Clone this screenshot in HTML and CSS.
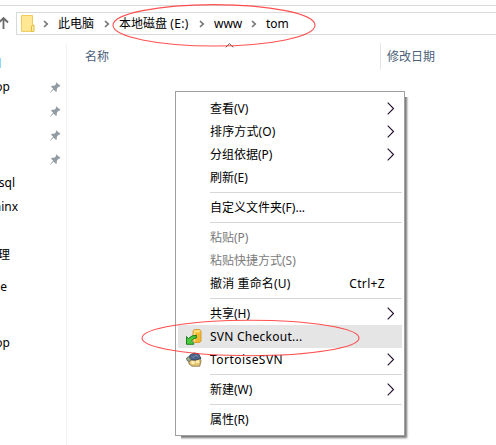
FILE: index.html
```
<!DOCTYPE html>
<html lang="zh-CN">
<head>
<meta charset="utf-8">
<title>tom</title>
<link rel="stylesheet" href="styles.css">
</head>
<body>
<svg class="defs" width="0" height="0" aria-hidden="true">
  <symbol id="crumb" viewBox="0 0 6 8"><path d="M1 1l3.2 3L1 7" fill="none" stroke="#747474" stroke-width="1.7"/></symbol>
  <symbol id="arrow" viewBox="0 0 8 13"><path d="M.7.7l5.8 5.8-5.8 5.8" fill="none" stroke="#24102e" stroke-width="1.1"/></symbol>
  <symbol id="pin" viewBox="0 0 11 11"><path d="M6.2.2l4.400 3.800-1 .8-.8-.2-2 2.200.1 2.300-.9.8-2.300-2.400L.3 10.800 0 10.500l3.100-3.700L1 4.600l.9-.9 2.500.1 2-2-.7-.8z" fill="#919ba3"/></symbol>
</svg>
<div class="window">
  <header class="toolbar">
    <svg class="up" width="10" height="14" viewBox="0 0 10 14"><path d="M3.500 13V2M-1 6.500L3.500 2 8 6.500" fill="none" stroke="#696969" stroke-width="1.8"/></svg>
    <nav class="address">
      <svg class="folder" width="14" height="17" viewBox="0 0 14 17"><path d="M.5.5h11v10h1.200v5.900H.5z" fill="#ffe793" stroke="#efcb5b"/><path d="M10.500 16.400V11l2.500-1v6.400z" fill="#fff0ae" stroke="#e6bb43"/></svg>
      <svg class="crumb"><use href="#crumb"/></svg><span class="c1">此电脑</span>
      <svg class="crumb"><use href="#crumb"/></svg><span class="c2">本地磁盘 <span class="letter">(E:)</span></span>
      <svg class="crumb"><use href="#crumb"/></svg><span class="c3">www</span>
      <svg class="crumb"><use href="#crumb"/></svg><span>tom</span>
    </nav>
  </header>
  <div class="content">
    <aside class="sidebar">
      <div class="row quick"><i></i></div>
      <div class="row"><span class="w9">op</span><svg class="pin"><use href="#pin"/></svg></div>
      <div class="row"><svg class="pin"><use href="#pin"/></svg></div>
      <div class="row"><svg class="pin"><use href="#pin"/></svg></div>
      <div class="row"><svg class="pin"><use href="#pin"/></svg></div>
      <div class="row"><span class="w15">sql</span></div>
      <div class="row"><span class="w18">ninx</span></div>
      <div class="row"></div>
      <div class="row"><span class="w9">理</span></div>
      <div class="row drive"><span class="w7">e</span></div>
      <div class="row"></div>
      <div class="row"><span class="w9">op</span></div>
    </aside>
    <main class="files">
      <div class="columns">
        <div class="name">名称<svg class="sort" width="9" height="5" viewBox="0 0 9 5"><path d="M.7 4.300l3.800-3.600 3.800 3.600" fill="none" stroke="#555"/></svg></div>
        <div class="date">修改日期</div>
      </div>
    </main>
  </div>
  <div class="menu">
    <div class="item"><span>查看(V)</span><svg class="arrow"><use href="#arrow"/></svg></div>
    <div class="item"><span class="loose">排序方式(O)</span><svg class="arrow"><use href="#arrow"/></svg></div>
    <div class="item"><span>分组依据(P)</span><svg class="arrow"><use href="#arrow"/></svg></div>
    <div class="item"><span>刷新(E)</span></div>
    <hr>
    <div class="item"><span>自定义文件夹(F)...</span></div>
    <hr>
    <div class="item off"><span>粘贴(P)</span></div>
    <div class="item off"><span>粘贴快捷方式(S)</span></div>
    <div class="item"><span class="loose">撤消 重命名(U)</span><span class="key">Ctrl+Z</span></div>
    <hr>
    <div class="item"><span>共享(H)</span><svg class="arrow"><use href="#arrow"/></svg></div>
    <div class="item active">
      <svg class="icon" width="16" height="16" viewBox="0 0 16 16"><path d="M7 2q0-1.600 4-1.600T15 2v10q0 1.600-4 1.600T7 12z" fill="#f5b931" stroke="#cf8d18" stroke-width=".8"/><path d="M8.500 3.500v9" stroke="#ffe48a" stroke-width="1.6"/><ellipse cx="11" cy="2.200" rx="3.500" ry="1.300" fill="#ffdf7a"/><path d="M.5 15.300V7.600l2.100 2Q5.400 6 10.500 6.300L10.300 9Q7 9 5.500 12l2.200 2.200v1.100z" fill="#4ccc3d" stroke="#137216" stroke-width=".9"/></svg>
      <span class="wide">SVN Checkout...</span>
    </div>
    <div class="item">
      <svg class="icon" width="16" height="16" viewBox="0 0 16 16"><path d="M2.500 7L14 6.200l1 3-1.300 5H6L3 12z" fill="#e5c574" stroke="#806a3c" stroke-width=".8"/><path d="M5.500 9h3v3h-3zM10 8.500h3V11h-3z" fill="#fff0b5"/><path d="M2.500 7.500L4 3l4-2 4.500.8L15 6.500 9 8.200z" fill="#4b628c" stroke="#2b3854" stroke-width=".8"/><path d="M5.500 4l2 1.500L10 3l2.500 2" fill="none" stroke="#8797b5" stroke-width=".8"/><path d="M.5 6l2-1.500L5 7.500 3.500 9.500 1 8.500z" fill="#9ca98c" stroke="#4d5c58" stroke-width=".7"/></svg>
      <span class="tortoise">TortoiseSVN</span><svg class="arrow"><use href="#arrow"/></svg>
    </div>
    <hr>
    <div class="item"><span>新建(W)</span><svg class="arrow"><use href="#arrow"/></svg></div>
    <hr>
    <div class="item"><span>属性(R)</span></div>
  </div>
  <svg class="marks" width="496" height="445" viewBox="0 0 496 445"><g fill="none" stroke="#f33" stroke-opacity=".85" stroke-width="1.1"><ellipse cx="214" cy="25.300" rx="101" ry="20.700"/><ellipse cx="250.500" cy="338" rx="108.500" ry="17.700"/></g></svg>
</div>
</body>
</html>
```
FILE: styles.css
```
* { box-sizing: border-box; }
body { margin: 0; background: #fff; color: #000; font: 12px/16px "Noto Sans", "Noto Sans CJK SC", sans-serif; }
.defs { position: absolute; }
.window { position: relative; width: 496px; height: 445px; overflow: hidden; }
svg { display: block; flex: none; }
span { white-space: nowrap; }

.toolbar { display: flex; height: 38px; padding-top: 12px; background: linear-gradient(#d9d9d9, #d9d9d9) 0 5px / 100% 1px no-repeat; }
.up { width: 10px; margin: 4px 6px 0 0; }
.address { display: flex; flex: 1; align-items: center; height: 23px; padding-left: 4px; border: 1px solid #d9d9d9; border-right: 0; }
.folder { margin-right: 8px; }
.crumb { width: 6px; height: 8px; margin-right: 9px; }
.c1 { width: 46px; }
.c2 { width: 80px; }
.c3 { width: 37px; }
.letter { letter-spacing: .4px; }

.content { display: flex; height: 407px; }
.sidebar { width: 67px; padding-top: 12px; background: linear-gradient(#f3f3f3, #f3f3f3) 66px 5px / 1px 100% no-repeat; }
.row { display: flex; align-items: center; height: 24px; }
.row.quick { height: 25px; }
.row.quick i { width: 1px; height: 10px; background: #8ed8fb; }
.row.drive { height: 40px; }
.row span { display: flex; justify-content: flex-end; overflow: hidden; }
.w7 { width: 7px; }
.w9 { width: 10px; }
.w15 { width: 15px; }
.w18 { width: 18px; }
.pin { width: 11px; height: 11px; margin-left: auto; margin-right: 6px; }

.files { flex: 1; }
.columns { display: flex; height: 32px; padding-top: 5px; color: #4c607a; line-height: 27px; }
.name { display: flex; width: 314px; padding-left: 18px; border-right: 1px solid #e5e5e5; }
.sort { margin-left: 116px; }
.date { padding-left: 6px; }

.menu { position: absolute; left: 175px; top: 91px; width: 230px; height: 345px; padding: 5px 2px 4px; border: 1px solid #a0a0a0; background: #fff; box-shadow: 2px 2px 2px 0 #777; clip-path: polygon(0 0, 230px 0, 230px 6px, 240px 6px, 240px 355px, 6px 355px, 6px 345px, 0 345px); }
.item { display: flex; position: relative; align-items: center; height: 23px; padding: 0 7px 0 32px; }
.item.active { background: #e5e5e5; }
.off { color: #7b7b7b; }
.loose { letter-spacing: .15px; }
.arrow { width: 8px; height: 13px; margin-left: auto; }
.key { margin-left: auto; margin-right: 10px; letter-spacing: .35px; }
.icon { margin: 0 8px 0 -24px; }
.wide { letter-spacing: .25px; }
.tortoise { letter-spacing: .45px; }
hr { height: 1px; margin: 3px 0 3px 32px; border: 0; background: #d7d7d7; }
.marks { position: absolute; left: 0; top: 0; pointer-events: none; }
```
